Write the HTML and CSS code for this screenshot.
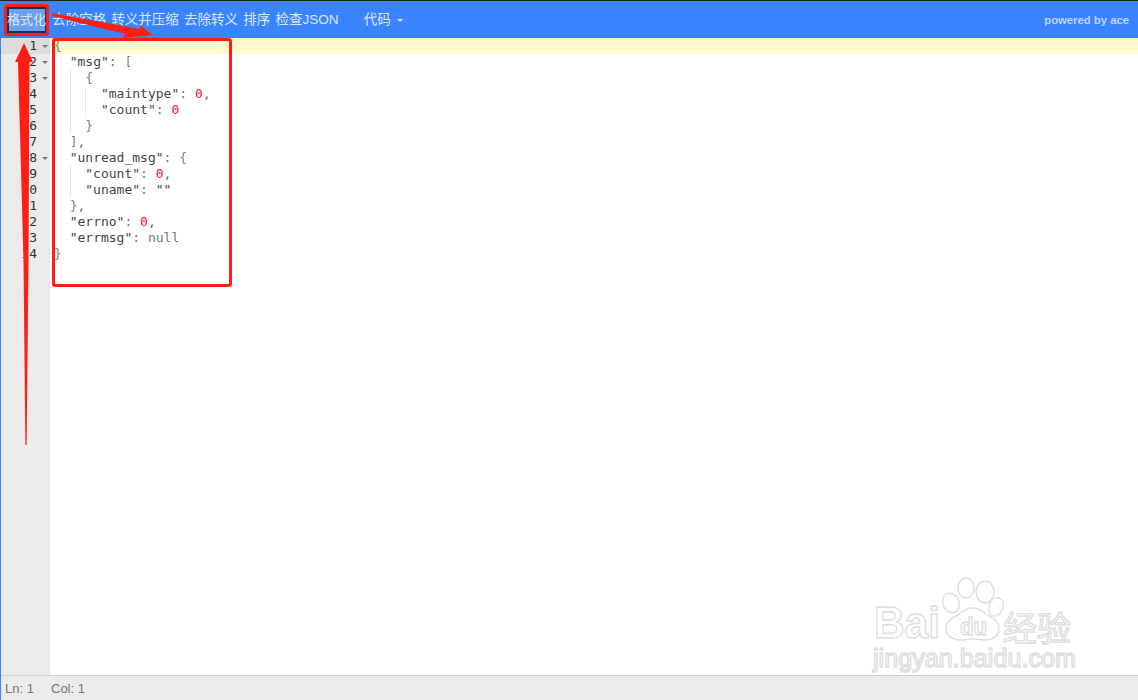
FILE: index.html
```html
<!DOCTYPE html>
<html lang="zh">
<head>
<meta charset="utf-8">
<title>JSON</title>
<link rel="stylesheet" href="styles.css">
</head>
<body>
<div class="app">
  <header class="toolbar">
    <span class="tool active">格式化</span>
    <span class="tool">去除空格</span>
    <span class="tool">转义并压缩</span>
    <span class="tool">去除转义</span>
    <span class="tool">排序</span>
    <span class="tool">检查JSON</span>
    <span class="tool menu">代码<i class="caret"></i></span>
    <span class="powered">powered by ace</span>
  </header>
  <main class="editor">
    <div class="gutter">
      <div class="gl current"><span class="num">1</span><i class="fold"></i></div>
      <div class="gl"><span class="num">2</span><i class="fold"></i></div>
      <div class="gl"><span class="num">3</span><i class="fold"></i></div>
      <div class="gl"><span class="num">4</span><i class="nofold"></i></div>
      <div class="gl"><span class="num">5</span><i class="nofold"></i></div>
      <div class="gl"><span class="num">6</span><i class="nofold"></i></div>
      <div class="gl"><span class="num">7</span><i class="nofold"></i></div>
      <div class="gl"><span class="num">8</span><i class="fold"></i></div>
      <div class="gl"><span class="num">9</span><i class="nofold"></i></div>
      <div class="gl"><span class="num">10</span><i class="nofold"></i></div>
      <div class="gl"><span class="num">11</span><i class="nofold"></i></div>
      <div class="gl"><span class="num">12</span><i class="nofold"></i></div>
      <div class="gl"><span class="num">13</span><i class="nofold"></i></div>
      <div class="gl"><span class="num">14</span><i class="nofold"></i></div>
    </div>
    <div class="code">
      <div class="line current"><span class="p">{</span></div>
      <div class="line">  <span class="s">"msg"</span><span class="c">:</span> <span class="p">[</span></div>
      <div class="line">  <span class="ind">  </span><span class="p">{</span></div>
      <div class="line">  <span class="ind">  </span><span class="ind">  </span><span class="s">"maintype"</span><span class="c">:</span> <span class="n">0</span><span class="c">,</span></div>
      <div class="line">  <span class="ind">  </span><span class="ind">  </span><span class="s">"count"</span><span class="c">:</span> <span class="n">0</span></div>
      <div class="line">  <span class="ind">  </span><span class="p">}</span></div>
      <div class="line">  <span class="p">]</span><span class="c">,</span></div>
      <div class="line">  <span class="s">"unread_msg"</span><span class="c">:</span> <span class="p">{</span></div>
      <div class="line">  <span class="ind">  </span><span class="s">"count"</span><span class="c">:</span> <span class="n">0</span><span class="c">,</span></div>
      <div class="line">  <span class="ind">  </span><span class="s">"uname"</span><span class="c">:</span> <span class="s">""</span></div>
      <div class="line">  <span class="p">}</span><span class="c">,</span></div>
      <div class="line">  <span class="s">"errno"</span><span class="c">:</span> <span class="n">0</span><span class="c">,</span></div>
      <div class="line">  <span class="s">"errmsg"</span><span class="c">:</span> <span class="k">null</span></div>
      <div class="line"><span class="p">}</span></div>
    </div>
  </main>
  <footer class="status"><span>Ln: 1</span><span>Col: 1</span></footer>

  <svg class="watermark" width="210" height="105" viewBox="0 0 210 105">
    <g class="wm">
      <ellipse cx="96" cy="13" rx="8" ry="10"/>
      <ellipse cx="115" cy="17" rx="9" ry="11"/>
      <ellipse cx="81" cy="28" rx="8" ry="10" transform="rotate(-25 81 28)"/>
      <ellipse cx="126" cy="32" rx="7" ry="9.5" transform="rotate(20 126 32)"/>
      <path d="M103 33c8 0 11 5 16 8 6 3 10 6 10 13 0 7-7 11-14 11-4 0-8-1-12-1s-8 1-13 1c-7 0-14-4-14-11 0-7 4-10 10-13 6-3 8-8 17-8z"/>
      <text class="wm-bai" x="4" y="63" textLength="66" lengthAdjust="spacingAndGlyphs">Bai</text>
      <text class="wm-du" x="90" y="60" textLength="27" lengthAdjust="spacingAndGlyphs">du</text>
      <text class="wm-cn" x="133" y="66">经验</text>
      <text class="wm-url" x="3" y="92" textLength="203" lengthAdjust="spacingAndGlyphs">jingyan.baidu.com</text>
    </g>
  </svg>

  <div class="mark mark-btn"></div>
  <div class="mark mark-code"></div>
  <svg class="arrows" width="240" height="450" viewBox="0 0 240 450">
    <polygon class="arrow" points="24,43 33,62 29.5,62 28.5,260 26.6,445 25.4,445 23.5,260 18,62 15,62"/>
    <polygon class="arrow" points="52,13 140,29 140,25 153,35 123,38 125,34 52,16"/>
  </svg>
</div>
</body>
</html>
```
FILE: styles.css
```css
* { box-sizing: border-box; }
html, body { margin: 0; height: 100%; background: #fff; overflow: hidden; }
.app {
  position: relative;
  height: 700px;
  display: flex;
  flex-direction: column;
  border-left: 1px solid #3a85ff;
}
.toolbar {
  height: 38px;
  flex: none;
  margin-left: -1px;
  display: flex;
  align-items: center;
  gap: 5.2px;
  padding: 0 9px 0 7px;
  background: #3a85ff;
  border-top: 1px solid #222;
  font-family: "Liberation Sans", "Noto Sans CJK SC", sans-serif;
  font-size: 13.5px;
  color: #dbe7ff;
}
.tool { white-space: nowrap; line-height: 24px; }
.tool.active {
  width: 40px;
  height: 26px;
  font-size: 13px;
  background: #6a9ff2;
  box-shadow: inset 0 0 0 2px #1e2c52;
  margin-top: 1px;
  line-height: 25px;
}
.tool.menu { margin-left: 20px; display: flex; align-items: center; }
.caret {
  margin-left: 6px;
  margin-top: 1px;
  border-left: 3px solid transparent;
  border-right: 3px solid transparent;
  border-top: 3px solid #dbe7ff;
}
.powered {
  margin-left: auto;
  font-size: 11.3px;
  font-weight: bold;
  color: #bcd4ff;
}
.editor {
  flex: 1;
  min-height: 0;
  display: flex;
  background: #fff;
  font-family: "DejaVu Sans Mono", monospace;
  font-size: 13px;
  line-height: 16px;
}
.gutter { width: 49px; flex: none; background: #ebebeb; color: #333; }
.gl { height: 16px; display: flex; align-items: center; }
.gl.current { background: #dcdcdc; }
.num { width: 36px; text-align: right; }
.fold, .nofold { width: 13px; flex: none; }
.fold { position: relative; height: 16px; }
.fold::after {
  content: "";
  position: absolute;
  left: 5px;
  top: 7px;
  border-left: 3px solid transparent;
  border-right: 3px solid transparent;
  border-top: 3px solid #777;
}
.code { flex: 1; min-width: 0; color: #444; }
.line { height: 16px; padding-left: 4px; white-space: pre; }
.line.current { background: #fff9d2; }
.ind { display: inline-block; width: 2ch; height: 16px; vertical-align: top; box-shadow: inset 1px 0 0 #e8e8e8; }
.s { color: #444; }
.c { color: #666; }
.p { color: #8a8070; }
.n { color: #f01434; }
.k { color: #777; }
.status {
  height: 25px;
  flex: none;
  display: flex;
  align-items: center;
  gap: 16px;
  padding-left: 4px;
  background: #ebebeb;
  border-top: 1px solid #cfcfcf;
  font-family: "Liberation Sans", sans-serif;
  font-size: 13px;
  color: #777;
}
.status span:first-child { width: 30px; }
.watermark { position: absolute; left: 869px; top: 575px; }
.wm { fill: #fff; stroke: #dedede; stroke-width: 1.4; }
.wm-bai { font: bold 44px "Liberation Sans", sans-serif; }
.wm-du { font: bold 24px "Liberation Sans", sans-serif; }
.wm-cn { font: 34px "Noto Sans CJK SC", sans-serif; }
.wm-url { font: 25px "Liberation Sans", sans-serif; }
.mark { position: absolute; border: 3px solid #fe1e14; border-radius: 3px; pointer-events: none; }
.mark-btn { left: 3px; top: 4px; width: 45px; height: 32px; }
.mark-code { left: 51px; top: 38px; width: 180px; height: 249px; }
.arrows { position: absolute; left: -1px; top: 0; }
.arrow { fill: #fe1e14; }
```
